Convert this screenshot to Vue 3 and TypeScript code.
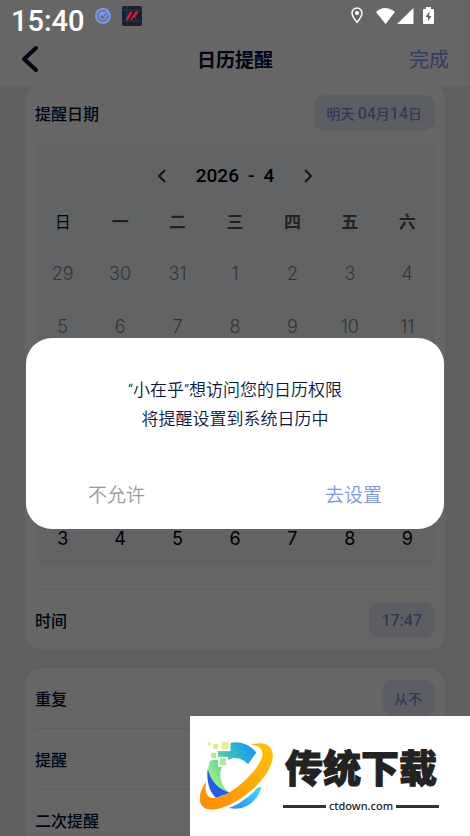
<script setup lang="ts">
import { ref } from 'vue'

interface Day {
  label: number
  past: boolean
}

const year = ref(2026)
const month = ref(4)
const dialogOpen = ref(true)
const weekdays = ['日', '一', '二', '三', '四', '五', '六']

function range(from: number, to: number, past: boolean): Day[] {
  return Array.from({ length: to - from + 1 }, (_, i) => ({ label: from + i, past }))
}

const days: Day[] = [
  ...range(29, 31, true),
  ...range(1, 13, true),
  ...range(14, 30, false),
  ...range(1, 9, false),
]
</script>

<template>
  <div class="app">
    <div class="status">
      <span class="clock">15:40</span>
      <svg class="status-app" width="16" height="16" viewBox="0 0 16 16" aria-hidden="true">
        <circle cx="8" cy="8" r="8" fill="#7b98ea" />
        <path d="M10.500 3.200A5.300 5.300 0 1 0 13.200 7M5.600 7.300l2 2.200 4.600-4.800" fill="none" stroke="#5d6882" stroke-width="1.200" />
        <path d="M5 8.600a3.200 3.200 0 0 0 6 .4" fill="none" stroke="#5d6882" stroke-width="0.800" />
      </svg>
      <svg class="status-game" width="20" height="20" viewBox="0 0 20 20" aria-hidden="true">
        <rect width="20" height="20" rx="2" fill="#17202f" />
        <path d="M0 4h20M0 15h20M5 0v20M14 11v9" stroke="#1c3a5c" stroke-width="1" />
        <rect x="4" y="16" width="11" height="4" fill="#202020" />
        <path d="M8 5.500h2.600L6.200 14H3.500zM13.500 5.500h3L13 11.500h-1.800L10 14H8z" fill="#f5123c" />
      </svg>
      <div class="status-right">
        <svg width="12" height="17" viewBox="0 0 12 17" aria-hidden="true">
          <path d="M6 1a5 5 0 0 0-5 5c0 3.500 5 9.300 5 9.300S11 9.500 11 6a5 5 0 0 0-5-5z" fill="none" stroke="#fff" stroke-width="1.500" />
          <circle cx="6" cy="6" r="2" fill="#fff" />
        </svg>
        <svg class="wifi" width="42" height="17" viewBox="0 0 42 17" aria-hidden="true">
          <path d="M1 5Q10-3 20 5L10.500 17z" fill="#fff" />
          <path d="M38.500 1v16H22z" fill="#fff" />
        </svg>
        <svg width="11" height="18" viewBox="0 0 11 18" aria-hidden="true">
          <path d="M3 0h5v2h2q1 0 1 1v13q0 1-1 1H1q-1 0-1-1V3q0-1 1-1h2z" fill="#fff" />
          <path d="M6.500 4.500L2.500 10H5v4.500L8.500 9H6.200z" fill="#666" />
        </svg>
      </div>
    </div>

    <header class="nav">
      <button class="back" type="button" aria-label="返回">
        <svg width="18" height="28" viewBox="0 0 18 28" aria-hidden="true">
          <path d="M15 3L3 14l12 11" fill="none" stroke="#000d33" stroke-width="4" stroke-linecap="round" stroke-linejoin="round" />
        </svg>
      </button>
      <h1>日历提醒</h1>
      <button class="done" type="button">完成</button>
    </header>

    <main>
      <section class="card first">
        <div class="row">
          <span>提醒日期</span>
          <button class="pill" type="button">明天 <b>04</b>月<b>14</b>日</button>
        </div>
        <div class="calendar">
          <div class="month">
            <button type="button" aria-label="上个月">
              <svg width="10" height="14" viewBox="0 0 10 14" aria-hidden="true"><path d="M8 1L2 7l6 6" /></svg>
            </button>
            <div class="month-name"><span>{{ year }}</span><span>-</span><span>{{ month }}</span></div>
            <button type="button" aria-label="下个月">
              <svg width="10" height="14" viewBox="0 0 10 14" aria-hidden="true"><path d="M2 1l6 6-6 6" /></svg>
            </button>
          </div>
          <div class="week">
            <span v-for="name in weekdays" :key="name">{{ name }}</span>
          </div>
          <div class="days">
            <button v-for="(day, i) in days" :key="i" type="button" :class="{ past: day.past }">{{ day.label }}</button>
          </div>
        </div>
        <div class="handle"><i></i></div>
        <div class="row ruled">
          <span>时间</span>
          <button class="pill" type="button"><b>17:47</b></button>
        </div>
      </section>

      <section class="card">
        <div class="row">
          <span>重复</span>
          <button class="pill" type="button">从不</button>
        </div>
        <div class="row ruled"><span>提醒</span></div>
        <div class="row ruled"><span>二次提醒</span></div>
      </section>
    </main>

    <div v-if="dialogOpen" class="overlay">
      <div class="dialog" role="dialog" aria-modal="true">
        <p>“小在乎”想访问您的日历权限<br />将提醒设置到系统日历中</p>
        <div class="actions">
          <button type="button" @click="dialogOpen = false">不允许</button>
          <button class="primary" type="button" @click="dialogOpen = false">去设置</button>
        </div>
      </div>
    </div>

    <aside class="brand">
      <svg width="77" height="72" viewBox="40 90 231 216" aria-hidden="true">
        <defs>
          <linearGradient id="ring" x1="1" y1="0" x2="0" y2="1">
            <stop offset="0" stop-color="#ffc400" />
            <stop offset="1" stop-color="#ff8a00" />
          </linearGradient>
          <linearGradient id="arc" gradientUnits="userSpaceOnUse" x1="85" y1="200" x2="205" y2="125">
            <stop offset="0" stop-color="#92ec84" />
            <stop offset="0.500" stop-color="#3cc4b8" />
            <stop offset="1" stop-color="#149cf2" />
          </linearGradient>
          <linearGradient id="tail" x1="0" y1="1" x2="1" y2="0">
            <stop offset="0" stop-color="#1e8ff0" />
            <stop offset="1" stop-color="#43dcff" />
          </linearGradient>
        </defs>
        <path d="M94 262C70 241 63 190 76 152L98 148V123L134 122V99C160 93 190 99 215 127L190 163C155 125 108 150 107 190C106 215 117 235 134 247z" fill="url(#arc)" />
        <path d="M69 177C78 212 100 239 136 248L94 264C73 244 65 212 69 177z" fill="#245cf0" />
        <path d="M133 294C166 281 198 257 217 235Q224 231 230 231C219 277 176 305 133 294z" fill="url(#tail)" />
        <path d="M65 215C36 251 36 300 82 299C145 298 254 213 264 145C268 105 237 91 198 105C235 104 242 131 224 160C195 207 127 264 86 264C64 263 59 241 65 215z" fill="url(#ring)" />
        <g stroke="#fff" stroke-width="5">
          <rect x="108" y="93" width="27" height="28" fill="#e4f396" />
          <rect x="84" y="100" width="18" height="19" fill="#c8ed91" />
          <rect x="66" y="94" width="15" height="15" fill="#e4f396" />
          <rect x="77" y="126" width="20" height="21" fill="#b1e694" />
          <rect x="103" y="143" width="24" height="25" fill="#afe892" />
        </g>
      </svg>
      <div class="brand-text">
        <strong>传统下载</strong>
        <div class="domain">ctdown.com</div>
      </div>
    </aside>
  </div>
</template>

<style>
body {
  overflow: hidden;
}
</style>

<style scoped>
.app {
  position: relative;
  box-sizing: border-box;
  height: 100vh;
  overflow: hidden;
  background: #f1f1f1;
  color: #000d33;
  font-family: Roboto, 'Noto Sans CJK SC', sans-serif;
}

button {
  padding: 0;
  border: 0;
  background: none;
  color: inherit;
  font: inherit;
}

svg {
  display: block;
}

.status {
  position: absolute;
  inset: 0 0 auto;
  z-index: 3;
  display: flex;
  height: 32px;
  padding: 0 36px 0 11px;
  color: #fff;
}

.clock {
  padding-top: 4px;
  font-size: 29px;
  font-weight: 500;
  line-height: 34px;
}

.status-app {
  margin: 8px 11px 0 10px;
}

.status-game {
  margin-top: 6px;
}

.status-right {
  display: flex;
  align-items: flex-start;
  margin-left: auto;
  padding-top: 7px;
}

.wifi {
  margin: 0 6px 0 12px;
}

.nav {
  position: relative;
  z-index: 1;
  display: grid;
  grid-template-columns: 1fr auto 1fr;
  align-items: center;
  height: 54px;
  padding: 32px 21px 0;
  background: #fff;
}

.nav h1 {
  margin: 0;
  padding-bottom: 2px;
  font-size: 19px;
  font-weight: 700;
}

.back {
  justify-self: start;
}

.done {
  justify-self: end;
  padding-bottom: 2px;
  color: #7b96ea;
  font-size: 20px;
}

main {
  display: flex;
  flex-direction: column;
  gap: 18px;
  padding: 0 25px;
}

.card {
  padding: 0 10px;
  border-radius: 16px;
  background: #fff;
  box-shadow: 0 0 12px rgba(0, 0, 0, 0.04);
}

.first {
  margin-top: -3px;
}

.row {
  display: flex;
  align-items: center;
  justify-content: space-between;
  height: 60px;
  font-size: 16px;
  font-weight: 500;
}

.ruled {
  border-top: 1px solid #e9ebf8;
}

.pill {
  height: 36px;
  padding: 0 13px 0 12px;
  border-radius: 10px;
  background: #e8ecf8;
  color: #7b8fd6;
  font-size: 14px;
}

.pill b {
  font-size: 16px;
  font-weight: 500;
}

.calendar {
  padding-bottom: 1px;
  border-radius: 8px;
  background: #f5f8fc;
}

.month {
  display: flex;
  align-items: center;
  justify-content: center;
  gap: 29px;
  height: 65px;
  color: #000;
  font-size: 19px;
  font-weight: 500;
}

.month-name {
  display: flex;
  gap: 9px;
}

.month path {
  fill: none;
  stroke: #333;
  stroke-width: 2;
}

.week,
.days {
  display: grid;
  grid-template-columns: repeat(7, 1fr);
  margin: 0 -1px;
}

.week {
  height: 24px;
  margin-bottom: 15px;
  align-items: center;
  text-align: center;
  color: #555;
  font-size: 17px;
  font-weight: 700;
}

.week span:first-child {
  color: #000d33;
  font-size: 16px;
  font-weight: 400;
}

.days button {
  height: 53px;
  color: #000;
  font-family: Inter, sans-serif;
  font-size: 18px;
}

.days .past {
  color: #808080;
  font-weight: 300;
}

.handle {
  display: flex;
  justify-content: center;
  height: 23px;
}

.handle i {
  width: 64px;
  height: 1px;
  margin-top: 5px;
  background: #f4f4f4;
}

.overlay {
  position: absolute;
  inset: 0;
  z-index: 2;
  display: flex;
  align-items: center;
  padding: 31px 26px 0;
  background: rgba(0, 0, 0, 0.6);
}

.dialog {
  flex: 1;
  padding: 38px 0 19px;
  border-radius: 26px;
  background: #fff;
}

.dialog p {
  margin: 0 0 47px;
  text-align: center;
  color: #0b1744;
  font-size: 17px;
  font-weight: 350;
  line-height: 29px;
}

.actions {
  display: flex;
  justify-content: space-between;
  padding: 0 62px;
  color: #999;
  font-size: 19px;
  font-weight: 350;
  line-height: 29px;
}

.actions .primary {
  color: #7b96ea;
}

.brand {
  position: absolute;
  right: 0;
  bottom: 0;
  z-index: 4;
  display: flex;
  align-items: center;
  box-sizing: border-box;
  width: 280px;
  height: 120px;
  padding-left: 8px;
  background: #fff;
  color: #222;
}

.brand-text {
  margin-left: 8px;
}

.brand strong {
  display: block;
  padding: 0 2px 6px;
  font-family: 'Noto Sans CJK SC', sans-serif;
  font-size: 38px;
  font-weight: 900;
  line-height: 54px;
  -webkit-text-stroke: 1px #222;
}

.domain {
  display: flex;
  align-items: center;
  gap: 3px;
  font-family: 'Noto Sans', sans-serif;
  font-size: 11px;
  font-weight: 500;
  line-height: 14px;
}

.domain::before,
.domain::after {
  flex: 1;
  height: 3px;
  background: #333;
  content: '';
}
</style>
